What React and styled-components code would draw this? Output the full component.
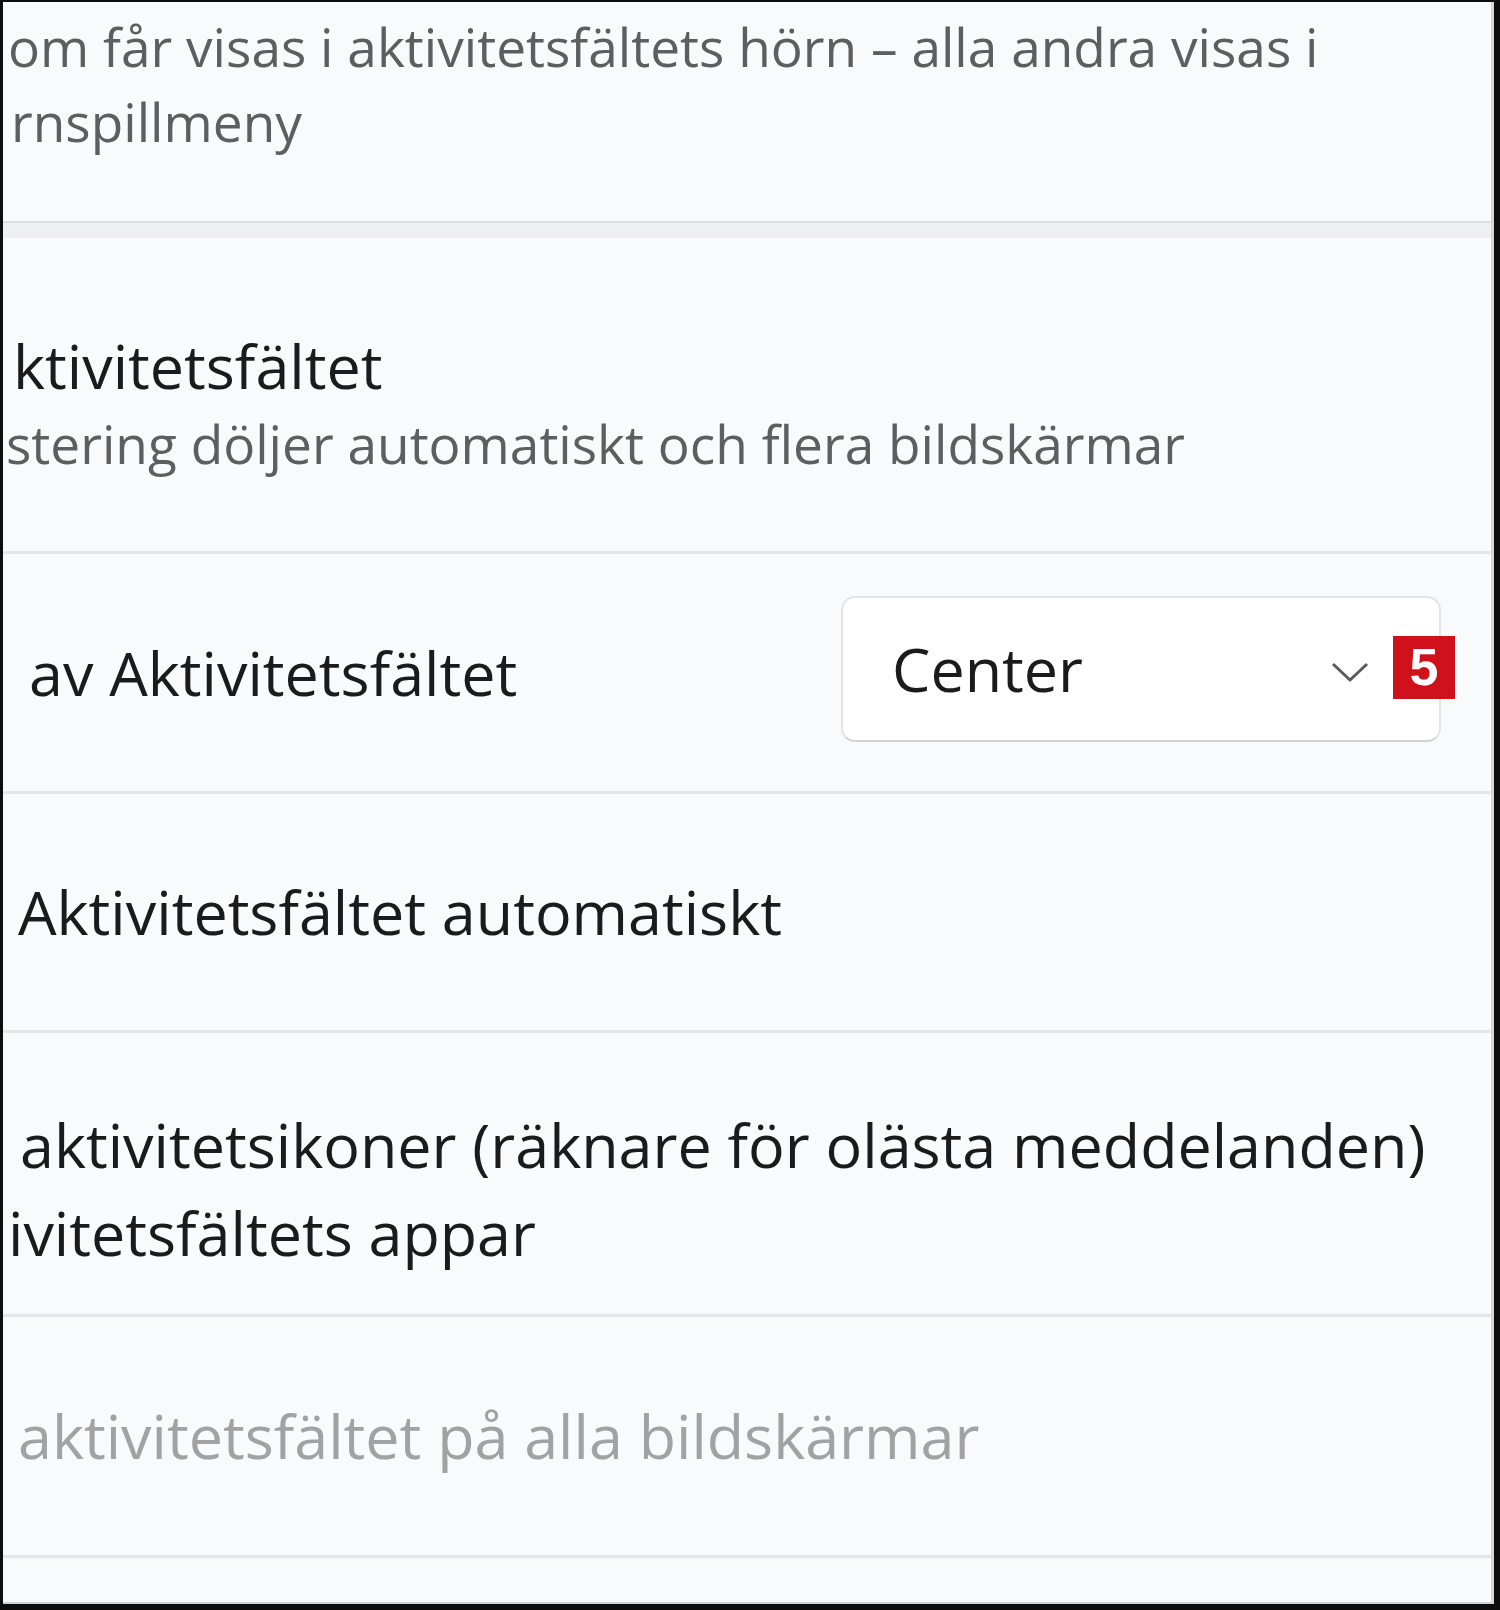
import React from "react";
import styled, { createGlobalStyle } from "styled-components";

const GlobalStyle = createGlobalStyle`
  html, body {
    margin: 0;
    padding: 0;
    background: #000;
  }
  body {
    font-family: "Open Sans", "Noto Sans", sans-serif;
  }
`;

const Frame = styled.div`
  width: 1500px;
  height: 1610px;
  box-sizing: border-box;
  border-style: solid;
  border-color: #0d0d0d;
  border-width: 2px 6px 6px 3px;
  background: #f9fafb;
  overflow: hidden;
`;

const Panel = styled.div`
  height: 100%;
  box-sizing: border-box;
  display: flex;
  flex-direction: column;
  border-right: 3px solid #d3d7da;
  border-bottom: 2px solid #cfd3d6;
`;

const TopCard = styled.div`
  height: 219px;
  box-sizing: border-box;
  padding-top: 7px;
  flex-shrink: 0;
`;

const CardGap = styled.div`
  height: 17px;
  box-sizing: border-box;
  border-top: 2px solid #dde2e5;
  background: #edf0f2;
  flex-shrink: 0;
`;

const Header = styled.div`
  height: 313px;
  box-sizing: border-box;
  padding: 88px 0 70px;
  flex-shrink: 0;
`;

const Row = styled.div`
  height: ${({ h }) => (h ? `${h}px` : "auto")};
  flex: ${({ h }) => (h ? "0 0 auto" : "1")};
  box-sizing: border-box;
  border-top: 3px solid #e3e7ea;
  display: flex;
  align-items: center;
  justify-content: space-between;
  padding: ${({ shift }) => (shift ? `${shift}px` : "0")} 50px 0 0;
`;

const Lines = styled.div`
  display: flex;
  flex-direction: column;
`;

const Primary = styled.div`
  font-size: 61px;
  line-height: ${({ lh }) => lh || 88}px;
  color: ${({ disabled }) => (disabled ? "#a2a2a2" : "#1b1b1b")};
  padding-left: ${({ indent }) => indent}px;
  white-space: nowrap;
`;

const Secondary = styled.div`
  font-size: 53.2px;
  line-height: 75px;
  color: #5e5e5e;
  padding-left: ${({ indent }) => indent}px;
  white-space: nowrap;
`;

const Dropdown = styled.div`
  position: relative;
  width: 600px;
  height: 146px;
  box-sizing: border-box;
  margin-bottom: 8px;
  padding: 0 70px 0 49px;
  display: flex;
  align-items: center;
  justify-content: space-between;
  background: #ffffff;
  border: 2px solid #e4e4e4;
  border-bottom-color: #d2d2d2;
  border-radius: 14px;
  font-size: 61px;
  color: #1b1b1b;
`;

const Chevron = styled.svg`
  width: 38px;
  height: 22px;
  margin-top: 6px;
`;

const Badge = styled.div`
  position: absolute;
  right: -16px;
  top: 38px;
  width: 62px;
  height: 63px;
  background: #cf111b;
  color: #fff;
  font-family: "Liberation Sans", Arial, sans-serif;
  font-weight: 700;
  font-size: 52px;
  line-height: 63px;
  text-align: center;
`;

export default function App() {
  return (
    <>
      <GlobalStyle />
      <Frame>
        <Panel>
          <TopCard>
            <Secondary indent={5}>
              om får visas i aktivitetsfältets hörn – alla andra visas i
            </Secondary>
            <Secondary indent={8}>rnspillmeny</Secondary>
          </TopCard>
          <CardGap />
          <Header>
            <Primary indent={10} lh={80}>
              ktivitetsfältet
            </Primary>
            <Secondary indent={3}>
              stering döljer automatiskt och flera bildskärmar
            </Secondary>
          </Header>
          <Row h={240}>
            <Primary indent={26}>av Aktivitetsfältet</Primary>
            <Dropdown>
              Center
              <Chevron viewBox="0 0 38 22">
                <polyline
                  points="2,3 19,19 36,3"
                  fill="none"
                  stroke="#5a5a5a"
                  strokeWidth="3"
                />
              </Chevron>
              <Badge>5</Badge>
            </Dropdown>
          </Row>
          <Row h={239}>
            <Primary indent={15}>Aktivitetsfältet automatiskt</Primary>
          </Row>
          <Row h={284} shift={30}>
            <Lines>
              <Primary indent={17}>
                aktivitetsikoner (räknare för olästa meddelanden)
              </Primary>
              <Primary indent={5}>ivitetsfältets appar</Primary>
            </Lines>
          </Row>
          <Row h={241}>
            <Primary indent={15} disabled>
              aktivitetsfältet på alla bildskärmar
            </Primary>
          </Row>
          <Row />
        </Panel>
      </Frame>
    </>
  );
}
